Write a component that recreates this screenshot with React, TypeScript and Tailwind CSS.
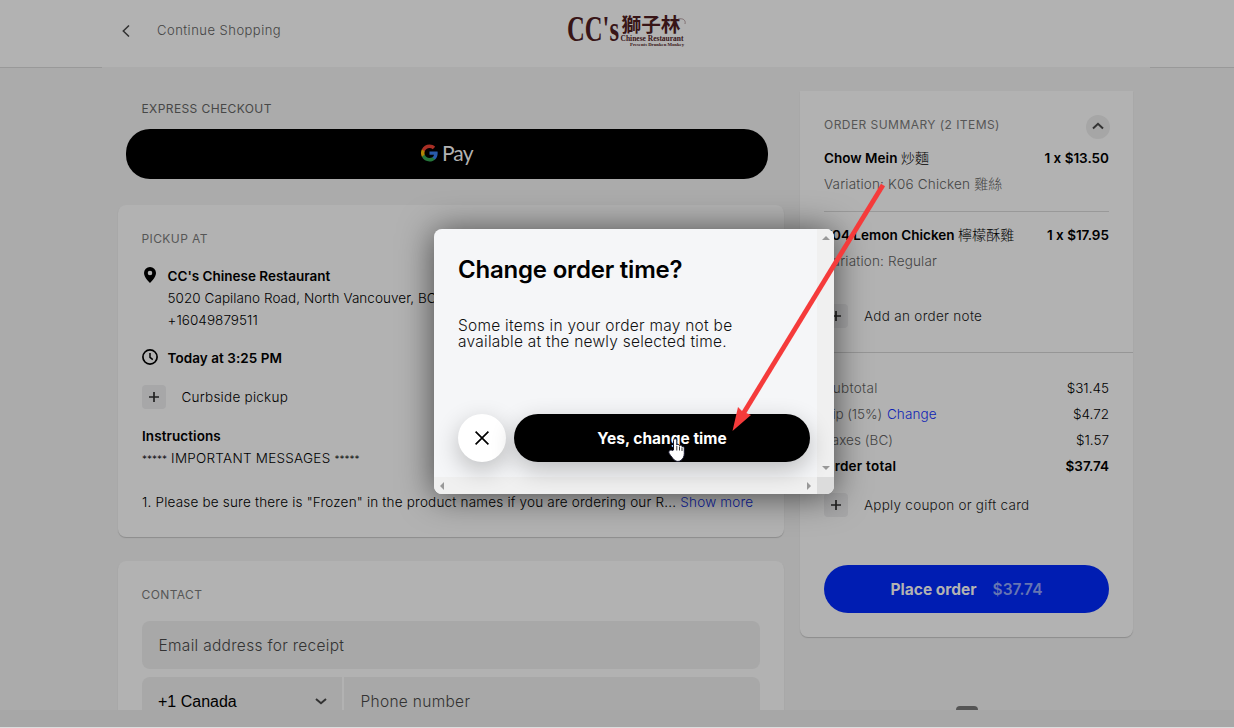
import React from "react";

function Plus() {
  return (
    <span className="flex h-6 w-6 shrink-0 items-center justify-center rounded bg-[#a7a7a8]">
      <svg width="10" height="10" viewBox="0 0 10 10" stroke="#222" strokeWidth="1.7">
        <path d="M5 0v10M0 5h10" />
      </svg>
    </span>
  );
}

function Logo() {
  return (
    <svg width="124" height="38" viewBox="0 0 124 38" className="ml-[284px] overflow-visible" fill="#381517">
      <g fontFamily="'Liberation Serif', serif" fontWeight="700">
        <text x="1" y="28.500" fontSize="35" textLength="52" lengthAdjust="spacingAndGlyphs">CC's</text>
        <text x="54.500" y="28.500" fontSize="7.500" textLength="63" lengthAdjust="spacingAndGlyphs">Chinese Restaurant</text>
        <text x="64" y="34.200" fontSize="4.500" textLength="54" lengthAdjust="spacingAndGlyphs">Presents Drunken Monkey</text>
      </g>
      <text x="55.500" y="19.500" fontSize="19" fontWeight="700" fontFamily="'Noto Sans CJK TC', sans-serif" textLength="59" lengthAdjust="spacingAndGlyphs">獅子林</text>
      <path d="M112 7c5-1 8 1 7 5" fill="none" stroke="#6b5557" strokeWidth=".7" />
    </svg>
  );
}

function GooglePay() {
  return (
    <button className="ml-2 mt-[10px] flex h-[50px] w-[642px] items-center rounded-[24px] bg-black pb-[2px] pl-[295px]">
      <svg width="17" height="18" viewBox="1 1 22 22">
        <path fill="#285bab" d="M22.56 12.25c0-.78-.07-1.53-.2-2.25H12v4.26h5.92c-.26 1.37-1.04 2.53-2.21 3.31v2.77h3.57c2.08-1.92 3.28-4.74 3.28-8.09z" />
        <path fill="#25763b" d="M12 23c2.97 0 5.46-.98 7.28-2.66l-3.57-2.77c-.98.66-2.23 1.06-3.71 1.06-2.86 0-5.29-1.93-6.16-4.53H2.18v2.84C3.99 20.53 7.7 23 12 23z" />
        <path fill="#b38604" d="M5.84 14.1c-.22-.66-.35-1.36-.35-2.1s.13-1.44.35-2.1V7.06H2.18a11 11 0 0 0 0 9.88l3.66-2.84z" />
        <path fill="#a92f25" d="M12 5.38c1.62 0 3.06.56 4.21 1.64l3.15-3.15C17.45 2.09 14.97 1 12 1 7.7 1 3.99 3.47 2.18 7.06l3.66 2.84C6.71 7.31 9.14 5.38 12 5.38z" />
      </svg>
      <span className="-mt-[2px] ml-1 font-['Lato'] text-[21px] leading-none tracking-[-0.9px] text-[#b2b2b2]">Pay</span>
    </button>
  );
}

function Pickup() {
  return (
    <section className="mt-[26px] h-[332px] rounded-lg bg-[#b2b2b2] px-6 pt-6 text-[13.500px] leading-[22px] shadow-[0_1px_1px_rgba(0,0,0,0.18)]">
      <h2 className="-ml-[0.500px] h-[19px] text-[12px] leading-[19px] tracking-[0.400px] text-[#565656]">PICKUP AT</h2>
      <div className="mt-[17px] flex">
        <svg width="16" height="18" viewBox="0 0 16 18" className="mt-px">
          <path fillRule="evenodd" d="M8 1a6 6 0 0 0-6 6c0 4.500 6 10 6 10s6-5.500 6-10a6 6 0 0 0-6-6zm0 3.700a2.300 2.300 0 1 1 0 4.600 2.300 2.300 0 0 1 0-4.600z" />
        </svg>
        <div className="ml-[9.500px]">
          <p className="font-semibold tracking-[0px]">CC's Chinese Restaurant</p>
          <p className="whitespace-nowrap font-[350] tracking-[0.060px]">5020 Capilano Road, North Vancouver, BC</p>
          <p className="font-[350] tracking-[0.060px]">+16049879511</p>
        </div>
      </div>
      <div className="mt-4 flex">
        <svg width="16" height="16" viewBox="0 0 16 16" fill="none" stroke="#000" className="mt-[2px]">
          <circle cx="8" cy="8" r="7.100" strokeWidth="1.700" />
          <path d="M8 4v4.300l2.800 2.300" strokeWidth="1.500" />
        </svg>
        <p className="ml-[9.500px] font-semibold tracking-[0.050px]">Today at 3:25 PM</p>
      </div>
      <div className="mt-4 flex h-6 items-center">
        <Plus />
        <span className="ml-[15.500px] font-[350] tracking-[0.250px]">Curbside pickup</span>
      </div>
      <p className="mt-4 font-semibold tracking-[0.080px]">Instructions</p>
      <p className="h-[22px] font-[350] tracking-[0.260px]">
        <span className="text-[10px] tracking-normal">*****</span> IMPORTANT MESSAGES <span className="text-[10px] tracking-normal">*****</span>
      </p>
      <p className="mt-[22px] whitespace-nowrap font-[350] tracking-[0.195px]">
        1. Please be sure there is "Frozen" in the product names if you are ordering our R... <a className="text-[#0f1fa0]">Show more</a>
      </p>
    </section>
  );
}

function Contact() {
  return (
    <section className="mt-6 h-[240px] shrink-0 rounded-lg bg-[#b2b2b2] px-6 pt-6 text-[#333] shadow-[0_1px_1px_rgba(0,0,0,0.18)]">
      <h2 className="-ml-[0.500px] h-[19px] text-[12px] leading-[19px] tracking-[0.4px] text-[#565656]">CONTACT</h2>
      <div className="mt-[17px] flex h-12 items-center rounded-lg bg-[#a8a8a8] pl-[16.500px] pt-[2px] text-[15.500px] font-light tracking-[0.300px]">Email address for receipt</div>
      <div className="mt-2 flex h-12 gap-[2px]">
        <div className="flex w-[200px] items-center justify-between rounded-l-lg bg-[#a8a8a8] pl-4 pr-[15px] pt-px font-['Liberation_Sans'] text-[16px] text-black">
          +1 Canada
          <svg width="12" height="7" viewBox="0 0 12 7" fill="none" stroke="#333" strokeWidth="2"><path d="M1 1 6 5.300 11 1" /></svg>
        </div>
        <div className="flex flex-1 items-center rounded-r-lg bg-[#a8a8a8] pl-[16.500px] pt-[2px] text-[15.500px] font-light tracking-[0.300px]">Phone number</div>
      </div>
    </section>
  );
}

function Item({ name, zh, price, variation }: { name: string; zh: string; price: string; variation: React.ReactNode }) {
  return (
    <div>
      <div className="flex h-[26px] justify-between font-semibold">
        <span className="tracking-[0.030px]">{name} <span className="font-['Noto_Sans_CJK_TC'] text-[14px] font-light leading-none">{zh}</span></span>
        <span>{price}</span>
      </div>
      <p className="h-[26px] font-[350] tracking-[0.180px] text-[#444]">Variation: {variation}</p>
    </div>
  );
}

function Summary() {
  return (
    <aside className="mt-[23px] flex h-[546px] w-[333px] shrink-0 flex-col rounded-b-lg bg-[#b2b2b2] text-[13.500px] leading-[26px] shadow-[0_1px_1px_rgba(0,0,0,0.18)]">
      <div className="flex h-[54px] items-start justify-between px-6 pt-6">
        <h2 className="text-[12px] leading-[20px] tracking-[0.450px] text-[#565656]">ORDER SUMMARY (2 ITEMS)</h2>
        <span className="-mr-px flex h-6 w-6 items-center justify-center rounded-full bg-[#a6a6a6]">
          <svg width="12" height="8" viewBox="0 0 12 8" fill="none" stroke="#333" strokeWidth="2" className="-mt-[2px]"><path d="M1 6.500 6 1.800 11 6.500" /></svg>
        </span>
      </div>
      <div className="px-6">
        <Item name="Chow Mein" zh="炒麵" price="1 x $13.50" variation={<>K06 Chicken <span className="font-['Noto_Sans_CJK_TC'] text-[14px] font-light leading-none">雞絲</span></>} />
        <div className="mb-[10px] mt-[14px] h-px bg-[#999]" />
        <Item name="F04 Lemon Chicken" zh="檸檬酥雞" price="1 x $17.95" variation="Regular" />
        <div className="mt-[30px] flex h-6 items-center text-[#141414]"><Plus /><span className="ml-4 font-[350] tracking-[0.300px]">Add an order note</span></div>
      </div>
      <div className="mt-6 h-px shrink-0 bg-[#969696]" />
      <div className="px-6 pt-[22px] font-[350] text-[#444]">
        <div className="flex justify-between"><span className="tracking-[0.300px]">Subtotal</span><span className="text-black">$31.45</span></div>
        <div className="flex justify-between"><span><span className="tracking-[-0.100px]">Tip (15%)</span> <a className="ml-px tracking-[0.100px] text-[#0f1fb5]">Change</a></span><span className="text-black">$4.72</span></div>
        <div className="flex justify-between"><span className="tracking-[0.060px]">Taxes (BC)</span><span className="text-black">$1.57</span></div>
        <div className="flex justify-between font-semibold text-black"><span className="tracking-[0.250px]">Order total</span><span>$37.74</span></div>
        <div className="mt-[14px] flex h-6 items-center text-[#141414]"><Plus /><span className="ml-4 tracking-[0.250px]">Apply coupon or gift card</span></div>
        <button className="mt-12 flex h-12 w-full items-center justify-center gap-4 rounded-full bg-[#001db2] pt-[2px] text-[15.500px] font-bold text-[#b2b2b2]">
          <span>Place order</span><span className="font-semibold text-[#6675b2]">$37.74</span>
        </button>
      </div>
    </aside>
  );
}

function Dialog() {
  return (
    <div className="absolute left-[434px] top-[229px] grid h-[265px] w-[400px] grid-cols-[383px_17px] grid-rows-[248px_17px] overflow-hidden rounded-lg bg-[#f5f6f8]">
      <div className="relative z-10 px-6 pt-[25px]">
        <h1 className="text-[24px] font-semibold leading-8 tracking-[-0.2px]">Change order time?</h1>
        <p className="mt-8 whitespace-nowrap text-[15.500px] font-light leading-4 tracking-[0.250px] text-[#111]">Some items in your order may not be<br />available at the newly selected time.</p>
        <div className="mt-16 flex w-[352px] gap-2">
          <button className="flex h-12 w-12 items-center justify-center rounded-full bg-white shadow-[0_8px_24px_rgba(0,0,0,0.24)]">
            <svg width="14" height="14" viewBox="0 0 14 14" stroke="#000" strokeWidth="1.700"><path d="m.6.600 12.800 12.800M13.400.600.600 13.400" /></svg>
          </button>
          <button className="h-12 w-[296px] rounded-full bg-black pt-[2px] text-[15.500px] font-bold text-white shadow-[0_8px_24px_rgba(0,0,0,0.24)]">Yes, change time</button>
        </div>
      </div>
      <div className="flex flex-col items-center justify-between bg-[#f0f0f0] py-[7px]">
        <svg width="8" height="4" fill="#999"><path d="M0 4 4 0l4 4z" /></svg>
        <svg width="8" height="4" fill="#999"><path d="m0 0 4 4 4-4z" /></svg>
      </div>
      <div className="flex items-center justify-between bg-[#f0f0f0] px-[6px]">
        <svg width="4" height="8" fill="#999"><path d="M4 0 0 4l4 4z" /></svg>
        <svg width="4" height="8" fill="#999"><path d="m0 0 4 4-4 4z" /></svg>
      </div>
      <div className="z-10 bg-[#dcdcdc]" />
    </div>
  );
}

function Annotations() {
  return (
    <svg className="absolute left-0 top-0 z-20" width="1234" height="728">
      <path d="M883 185 743 414" stroke="#f53b3b" strokeWidth="4.800" />
      <path d="M732.500 431 738 407l4.500 4.500 8.500 3.500z" fill="#f53b3b" />
      <path d="M673.500 450v-9.500c0-2.400 3.300-2.400 3.300 0v4.500c.8-1 2.400-.7 2.700.6 1-.7 2.300-.3 2.500.9 1.200-.4 2.300.3 2.300 1.700v5.300c0 3.500-1.500 5-2.800 6.500-1.800 1.900-5.400 1.900-7.200 0-1.500-1.500-3.600-4.200-5-6.300-1.600-2.500 1.400-4.500 2.800-3.200z" fill="#fff" stroke="#14142a" strokeWidth="1" />
      <path d="M676.800 446v4.500M679.500 446.500v4M682 447.500v3.500" stroke="#222" strokeWidth=".9" />
    </svg>
  );
}

export default function App() {
  return (
    <div className="relative flex h-[728px] w-[1234px] flex-col overflow-hidden bg-[#ababab] font-['Inter','Noto_Sans_CJK_TC',sans-serif] text-black">
      <header className="h-[68px] shrink-0 bg-[#b2b2b2]">
        <div className="flex h-[67px] items-center pl-[122px] pb-[6px]">
          <svg width="8" height="12" viewBox="0 0 8 12" fill="none" stroke="#333" strokeWidth="1.500"><path d="M7 .500 1.300 6 7 11.500" /></svg>
          <span className="ml-[27px] w-[125px] whitespace-nowrap pt-px text-[13px] font-[350] tracking-[0.480px] text-[#444]">Continue Shopping</span>
          <Logo />
        </div>
        <div className="flex h-px justify-between bg-[#ababab]"><div className="w-[102px] bg-[#999]" /><div className="w-[84px] bg-[#999]" /></div>
      </header>
      <main className="flex h-[642px] shrink-0 gap-4 overflow-hidden pl-[118px]">
        <div className="w-[666px]">
          <h2 className="ml-[23.500px] mt-[31px] h-5 text-[12px] leading-[19px] tracking-[0.400px] text-[#474747]">EXPRESS CHECKOUT</h2>
          <GooglePay />
          <Pickup />
          <Contact />
        </div>
        <div className="flex flex-col">
          <Summary />
          <div className="ml-[156px] mt-[69px] h-6 w-[22px] shrink-0 rounded bg-[#555]" />
        </div>
      </main>
      <div className="h-[17px] shrink-0 bg-[#a7a7a7]" />
      <div className="h-px shrink-0 bg-[#dedede]" />
      <div className="absolute left-[434px] top-[229px] h-[265px] w-[400px] rounded-lg shadow-[0_2px_34px_rgba(0,0,0,0.6)]" />
      <Dialog />
      <Annotations />
    </div>
  );
}
